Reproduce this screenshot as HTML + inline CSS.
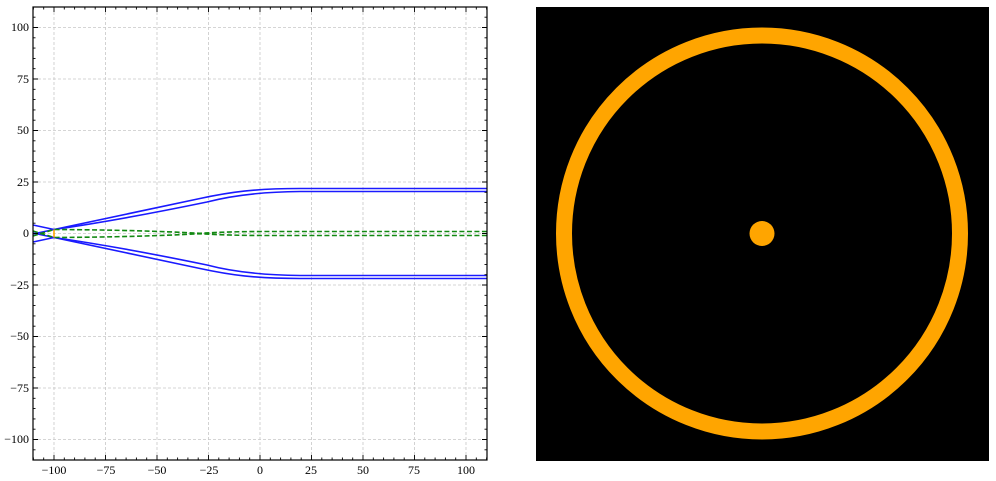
<!DOCTYPE html>
<html><head><meta charset="utf-8"><style>
html,body{margin:0;padding:0;background:#fff;width:996px;height:481px;overflow:hidden}
svg{display:block}
text{font-family:"Liberation Serif",serif;font-size:12px;fill:#000}
</style></head><body>
<svg id="s" width="996" height="481" viewBox="0 0 996 481">
<g id="grid" stroke="#c8c8c8" stroke-width="0.8" stroke-dasharray="3,2" fill="none"></g>
<g fill="none" stroke-width="1.6">
<path stroke="#1a1aff" d="M33,234 L54,229.5 L200,198.5 C230,192 255,188.5 300,188.5 L487,188.5"/>
<path stroke="#1a1aff" d="M33,225 L54,229.5 Q120,220 207,202 Q245,192 300,191.5 L487,191.5"/>
<path stroke="#1a1aff" d="M33,233 L54,237.5 L200,268.5 C230,275 255,278.5 300,278.5 L487,278.5"/>
<path stroke="#1a1aff" d="M33,242 L54,237.5 Q120,247 207,265 Q245,275 300,275.5 L487,275.5"/>
<path stroke="#118811" stroke-dasharray="5,2.5" d="M33,236 L54,229.5 Q140,230 200,233.3 Q230,231.5 265,231.5 L487,231.5"/>
<path stroke="#118811" stroke-dasharray="5,2.5" d="M33,231 L54,237.5 Q140,237 200,233.7 Q230,235.5 265,235.5 L487,235.5"/>
<path stroke="#ffa500" d="M54,229.5 L54,237.5"/>
</g>
<g id="ticks" stroke="#000" stroke-width="0.9" fill="none"></g>
<rect x="33" y="7" width="454" height="453" fill="none" stroke="#000" stroke-width="1.2"/>
<g text-anchor="middle">
<text x="54" y="474">−100</text><text x="106" y="474">−75</text><text x="157" y="474">−50</text><text x="209" y="474">−25</text><text x="260" y="474">0</text><text x="311" y="474">25</text><text x="363" y="474">50</text><text x="414" y="474">75</text><text x="466" y="474">100</text>
</g>
<g text-anchor="end">
<text x="29" y="31">100</text><text x="29" y="83">75</text><text x="29" y="134">50</text><text x="29" y="186">25</text><text x="29" y="237">0</text><text x="29" y="289">−25</text><text x="29" y="340">−50</text><text x="29" y="392">−75</text><text x="29" y="443">−100</text>
</g>
<rect x="536" y="7" width="453" height="454" fill="#000"/>
<circle cx="762" cy="233.5" r="198" fill="none" stroke="#ffa500" stroke-width="16"/>
<circle cx="762" cy="233.5" r="12.5" fill="#ffa500"/>
</svg>
<script>
var X=d=>260+2.06*d, Y=d=>233.5-2.06*d;
var g="",t="";
for(var d=-100;d<=100;d+=25){g+="M"+X(d)+",7V460M33,"+Y(d)+"H487";}
for(var d=-110;d<=110;d+=5){var L=d%25==0?5:2.5;
t+="M"+X(d)+",460v-"+L+"M"+X(d)+",7v"+L+"M33,"+Y(d)+"h"+L+"M487,"+Y(d)+"h-"+L;}
document.getElementById("grid").innerHTML='<path d="'+g+'"/>';
document.getElementById("ticks").innerHTML='<path d="'+t+'"/>';
</script>
</body></html>
